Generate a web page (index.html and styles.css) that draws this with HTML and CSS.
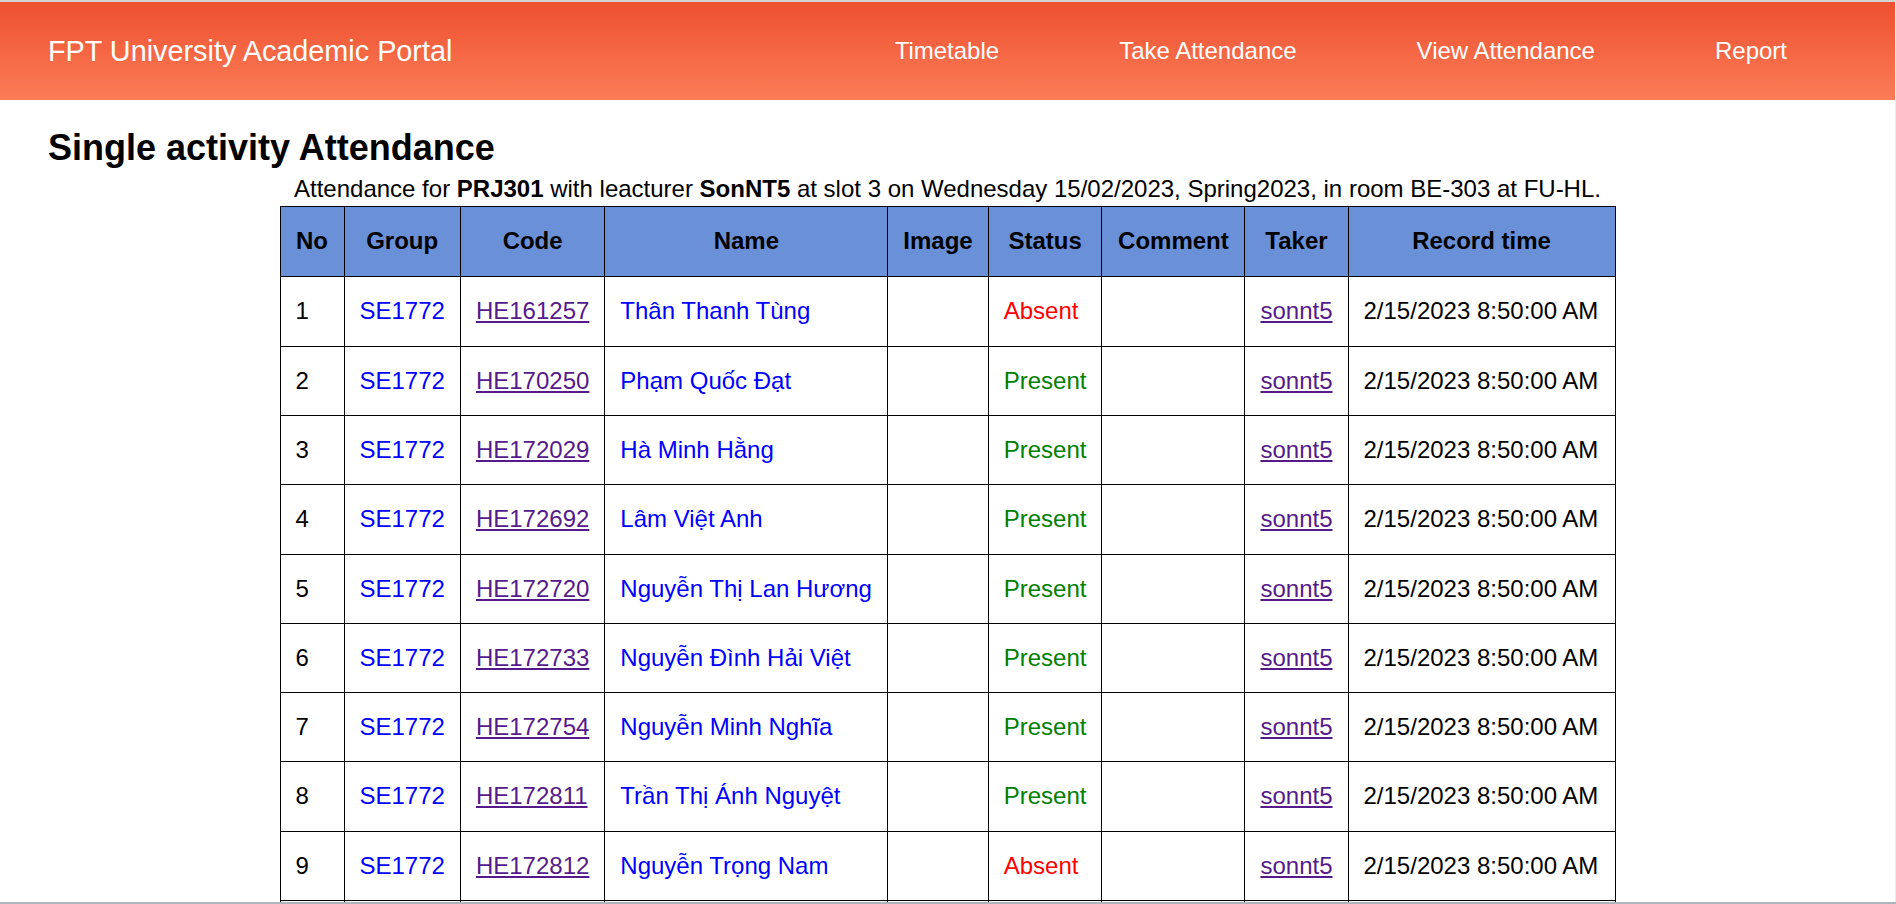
FILE: index.html
```html
<!DOCTYPE html>
<html lang="vi">
<head>
<meta charset="utf-8">
<title>Single activity Attendance</title>
<link rel="stylesheet" href="styles.css">
</head>
<body>
<div class="frame">
  <header class="topbar">
    <div class="brand">FPT University Academic Portal</div>
    <nav class="nav">
      <a class="nav-link" href="#">Timetable</a>
      <a class="nav-link" href="#">Take Attendance</a>
      <a class="nav-link" href="#">View Attendance</a>
      <a class="nav-link" href="#">Report</a>
    </nav>
  </header>
  <main class="content">
    <h1 class="title">Single activity Attendance</h1>
    <p class="subtitle">Attendance for <b>PRJ301</b> with leacturer <b>SonNT5</b> at slot 3 on Wednesday 15/02/2023, Spring2023, in room BE-303 at FU-HL.</p>
    <table class="att">
      <thead>
        <tr>
          <th class="c-no">No</th>
          <th class="c-group">Group</th>
          <th class="c-code">Code</th>
          <th class="c-name">Name</th>
          <th class="c-image">Image</th>
          <th class="c-status">Status</th>
          <th class="c-comment">Comment</th>
          <th class="c-taker">Taker</th>
          <th class="c-time">Record time</th>
        </tr>
      </thead>
      <tbody>
        <tr><td>1</td><td class="blue">SE1772</td><td><a class="visited" href="#">HE161257</a></td><td class="blue">Thân Thanh Tùng</td><td></td><td class="absent">Absent</td><td></td><td><a class="visited" href="#">sonnt5</a></td><td>2/15/2023 8:50:00 AM</td></tr>
        <tr><td>2</td><td class="blue">SE1772</td><td><a class="visited" href="#">HE170250</a></td><td class="blue">Phạm Quốc Đạt</td><td></td><td class="present">Present</td><td></td><td><a class="visited" href="#">sonnt5</a></td><td>2/15/2023 8:50:00 AM</td></tr>
        <tr><td>3</td><td class="blue">SE1772</td><td><a class="visited" href="#">HE172029</a></td><td class="blue">Hà Minh Hằng</td><td></td><td class="present">Present</td><td></td><td><a class="visited" href="#">sonnt5</a></td><td>2/15/2023 8:50:00 AM</td></tr>
        <tr><td>4</td><td class="blue">SE1772</td><td><a class="visited" href="#">HE172692</a></td><td class="blue">Lâm Việt Anh</td><td></td><td class="present">Present</td><td></td><td><a class="visited" href="#">sonnt5</a></td><td>2/15/2023 8:50:00 AM</td></tr>
        <tr><td>5</td><td class="blue">SE1772</td><td><a class="visited" href="#">HE172720</a></td><td class="blue">Nguyễn Thị Lan Hương</td><td></td><td class="present">Present</td><td></td><td><a class="visited" href="#">sonnt5</a></td><td>2/15/2023 8:50:00 AM</td></tr>
        <tr><td>6</td><td class="blue">SE1772</td><td><a class="visited" href="#">HE172733</a></td><td class="blue">Nguyễn Đình Hải Việt</td><td></td><td class="present">Present</td><td></td><td><a class="visited" href="#">sonnt5</a></td><td>2/15/2023 8:50:00 AM</td></tr>
        <tr><td>7</td><td class="blue">SE1772</td><td><a class="visited" href="#">HE172754</a></td><td class="blue">Nguyễn Minh Nghĩa</td><td></td><td class="present">Present</td><td></td><td><a class="visited" href="#">sonnt5</a></td><td>2/15/2023 8:50:00 AM</td></tr>
        <tr><td>8</td><td class="blue">SE1772</td><td><a class="visited" href="#">HE172811</a></td><td class="blue">Trần Thị Ánh Nguyệt</td><td></td><td class="present">Present</td><td></td><td><a class="visited" href="#">sonnt5</a></td><td>2/15/2023 8:50:00 AM</td></tr>
        <tr><td>9</td><td class="blue">SE1772</td><td><a class="visited" href="#">HE172812</a></td><td class="blue">Nguyễn Trọng Nam</td><td></td><td class="absent">Absent</td><td></td><td><a class="visited" href="#">sonnt5</a></td><td>2/15/2023 8:50:00 AM</td></tr>
        <tr><td>10</td><td class="blue">SE1772</td><td><a class="visited" href="#">HE172813</a></td><td class="blue">Nguyễn Văn An</td><td></td><td class="present">Present</td><td></td><td><a class="visited" href="#">sonnt5</a></td><td>2/15/2023 8:50:00 AM</td></tr>
      </tbody>
    </table>
  </main>
</div>
<div class="bottom-edge"></div>
</body>
</html>
```

FILE: styles.css
```css
html, body {
  margin: 0;
  padding: 0;
  background: #ffffff;
}

body {
  font-family: "Liberation Sans", Arial, sans-serif;
  color: #000000;
}

.frame {
  border-top: 2px solid #d4d4d4;
  border-right: 1px solid #ececec;
  min-height: 902px;
  box-sizing: border-box;
}

.topbar {
  height: 98px;
  display: flex;
  align-items: center;
  justify-content: space-between;
  padding: 0 108px 0 48px;
  background: linear-gradient(to bottom, #ee5030 0%, #fb7c57 100%);
}

.brand {
  color: #ffffff;
  font-size: 28.8px;
  line-height: 1;
}

.nav {
  display: flex;
  gap: 120px;
}

.nav-link {
  color: #ffffff;
  text-decoration: none;
  font-size: 24px;
}

.content {
  padding: 0 48px;
}

.title {
  font-size: 36px;
  font-weight: bold;
  margin: 27px 0 6px;
  line-height: normal;
}

.subtitle {
  text-align: center;
  font-size: 24px;
  margin: 0 0 3px;
  line-height: 27.6px;
}

.att {
  margin: 0 auto;
  border-collapse: collapse;
  font-size: 24px;
}

.att th,
.att td {
  border: 1px solid #000000;
  padding: 20px 15px;
  line-height: 28.3px;
  white-space: nowrap;
}

.att th {
  background: #6a90d8;
  font-weight: bold;
  text-align: center;
  padding-top: 20.5px;
  padding-bottom: 21px;
}

.att td {
  text-align: left;
}

.c-no { width: 33px; }
.c-group { width: 85px; }
.c-code { width: 113px; }
.c-name { width: 252px; }
.c-image { width: 67px; }
.c-status { width: 82px; }
.c-comment { width: 112px; }
.c-taker { width: 70px; }
.c-time { width: 236px; }

.blue { color: #0000ff; }
.absent { color: #ff0000; }
.present { color: #008000; }

.visited {
  color: #551a8b;
  text-decoration: underline;
}

.bottom-edge {
  position: fixed;
  left: 0;
  right: 0;
  bottom: 0;
  height: 2px;
  background: #aeb6ba;
}
```
